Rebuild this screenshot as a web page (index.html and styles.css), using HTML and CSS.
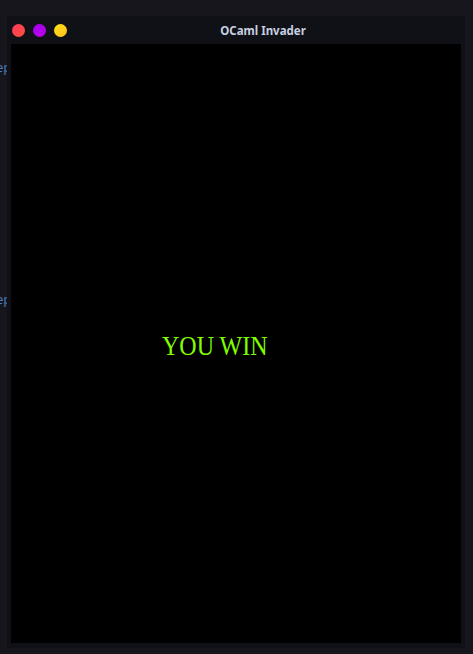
FILE: index.html
```html
<!DOCTYPE html>
<html>
<head>
<meta charset="utf-8">
<link rel="stylesheet" href="styles.css">
</head>
<body>
<span class="behind behind-1">ep</span>
<span class="behind behind-2">ep</span>
<div class="window">
  <div class="titlebar">
    <div class="lights">
      <span class="light light-close"></span>
      <span class="light light-min"></span>
      <span class="light light-max"></span>
    </div>
    <div class="title">OCaml Invader</div>
  </div>
  <div class="canvas">
    <div class="message">YOU WIN</div>
  </div>
</div>
</body>
</html>
```
FILE: styles.css
```css
html, body {
  margin: 0;
  padding: 0;
  background: #16161c;
  width: 473px;
  height: 654px;
  overflow: hidden;
  position: relative;
  font-family: "Noto Sans", "Open Sans", sans-serif;
}
.behind {
  position: absolute;
  left: -4px;
  font-size: 13px;
  color: #4a78b2;
  font-family: "Noto Sans", sans-serif;
}
.behind-1 { top: 58px; }
.behind-2 { top: 290px; }
.window {
  position: absolute;
  left: 7px;
  top: 16px;
  width: 458px;
  height: 632px;
  background: #101116;
  display: flex;
  flex-direction: column;
  box-sizing: border-box;
  padding: 0 4px 5px 4px;
}
.titlebar {
  height: 28px;
  display: flex;
  align-items: center;
  margin: 0 -4px;
  padding: 0 5px;
}
.lights {
  display: flex;
  gap: 8px;
}
.light {
  width: 13px;
  height: 13px;
  border-radius: 50%;
  display: block;
}
.light-close { background: linear-gradient(135deg, #ff3a5c, #ff4f3c); }
.light-min { background: linear-gradient(135deg, #a100f2, #c000e8); }
.light-max { background: linear-gradient(135deg, #ffe21a, #ffc01a); }
.title {
  flex: 1;
  text-align: center;
  color: #c8d0e0;
  font-weight: 700;
  font-size: 11.5px;
  padding-right: 1px;
}
.canvas {
  flex: 1;
  background: #000;
  position: relative;
}
.message {
  position: absolute;
  left: 151px;
  top: 291px;
  font-family: "Liberation Serif", "Times New Roman", serif;
  font-size: 24px;
  color: #7fff00;
  transform: scaleY(1.15);
  transform-origin: left bottom;
}
```
